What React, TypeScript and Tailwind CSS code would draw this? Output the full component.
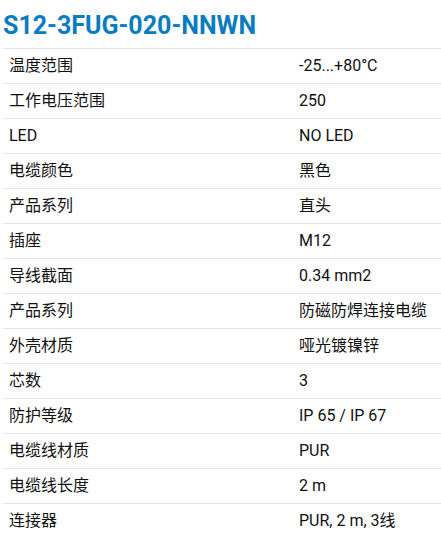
import React from "react";

const rows: [string, string][] = [
  ["温度范围", "-25...+80°C"],
  ["工作电压范围", "250"],
  ["LED", "NO LED"],
  ["电缆颜色", "黑色"],
  ["产品系列", "直头"],
  ["插座", "M12"],
  ["导线截面", "0.34 mm2"],
  ["产品系列", "防磁防焊连接电缆"],
  ["外壳材质", "哑光镀镍锌"],
  ["芯数", "3"],
  ["防护等级", "IP 65 / IP 67"],
  ["电缆线材质", "PUR"],
  ["电缆线长度", "2 m"],
  ["连接器", "PUR, 2 m, 3线"],
];

export default function App() {
  return (
    <div
      className="bg-white w-[441px] h-[535px] overflow-hidden"
      style={{ fontFamily: 'Roboto, "Noto Sans CJK SC", sans-serif' }}
    >
      <h1 className="pl-[3px] pt-[10px] h-[48px] text-[25px] font-bold leading-[32px] text-[#0a7cc1]">
        S12-3FUG-020-NNWN
      </h1>
      <div className="ml-[3px] border-t border-[#e6e6e6]">
        {rows.map(([k, v], i) => (
          <div
            key={i}
            className="flex h-[35px] items-center border-b border-[#e6e6e6] text-[16px] text-[#111]"
          >
            <div className="w-[296px] pl-[6px]">{k}</div>
            <div>{v}</div>
          </div>
        ))}
      </div>
    </div>
  );
}
